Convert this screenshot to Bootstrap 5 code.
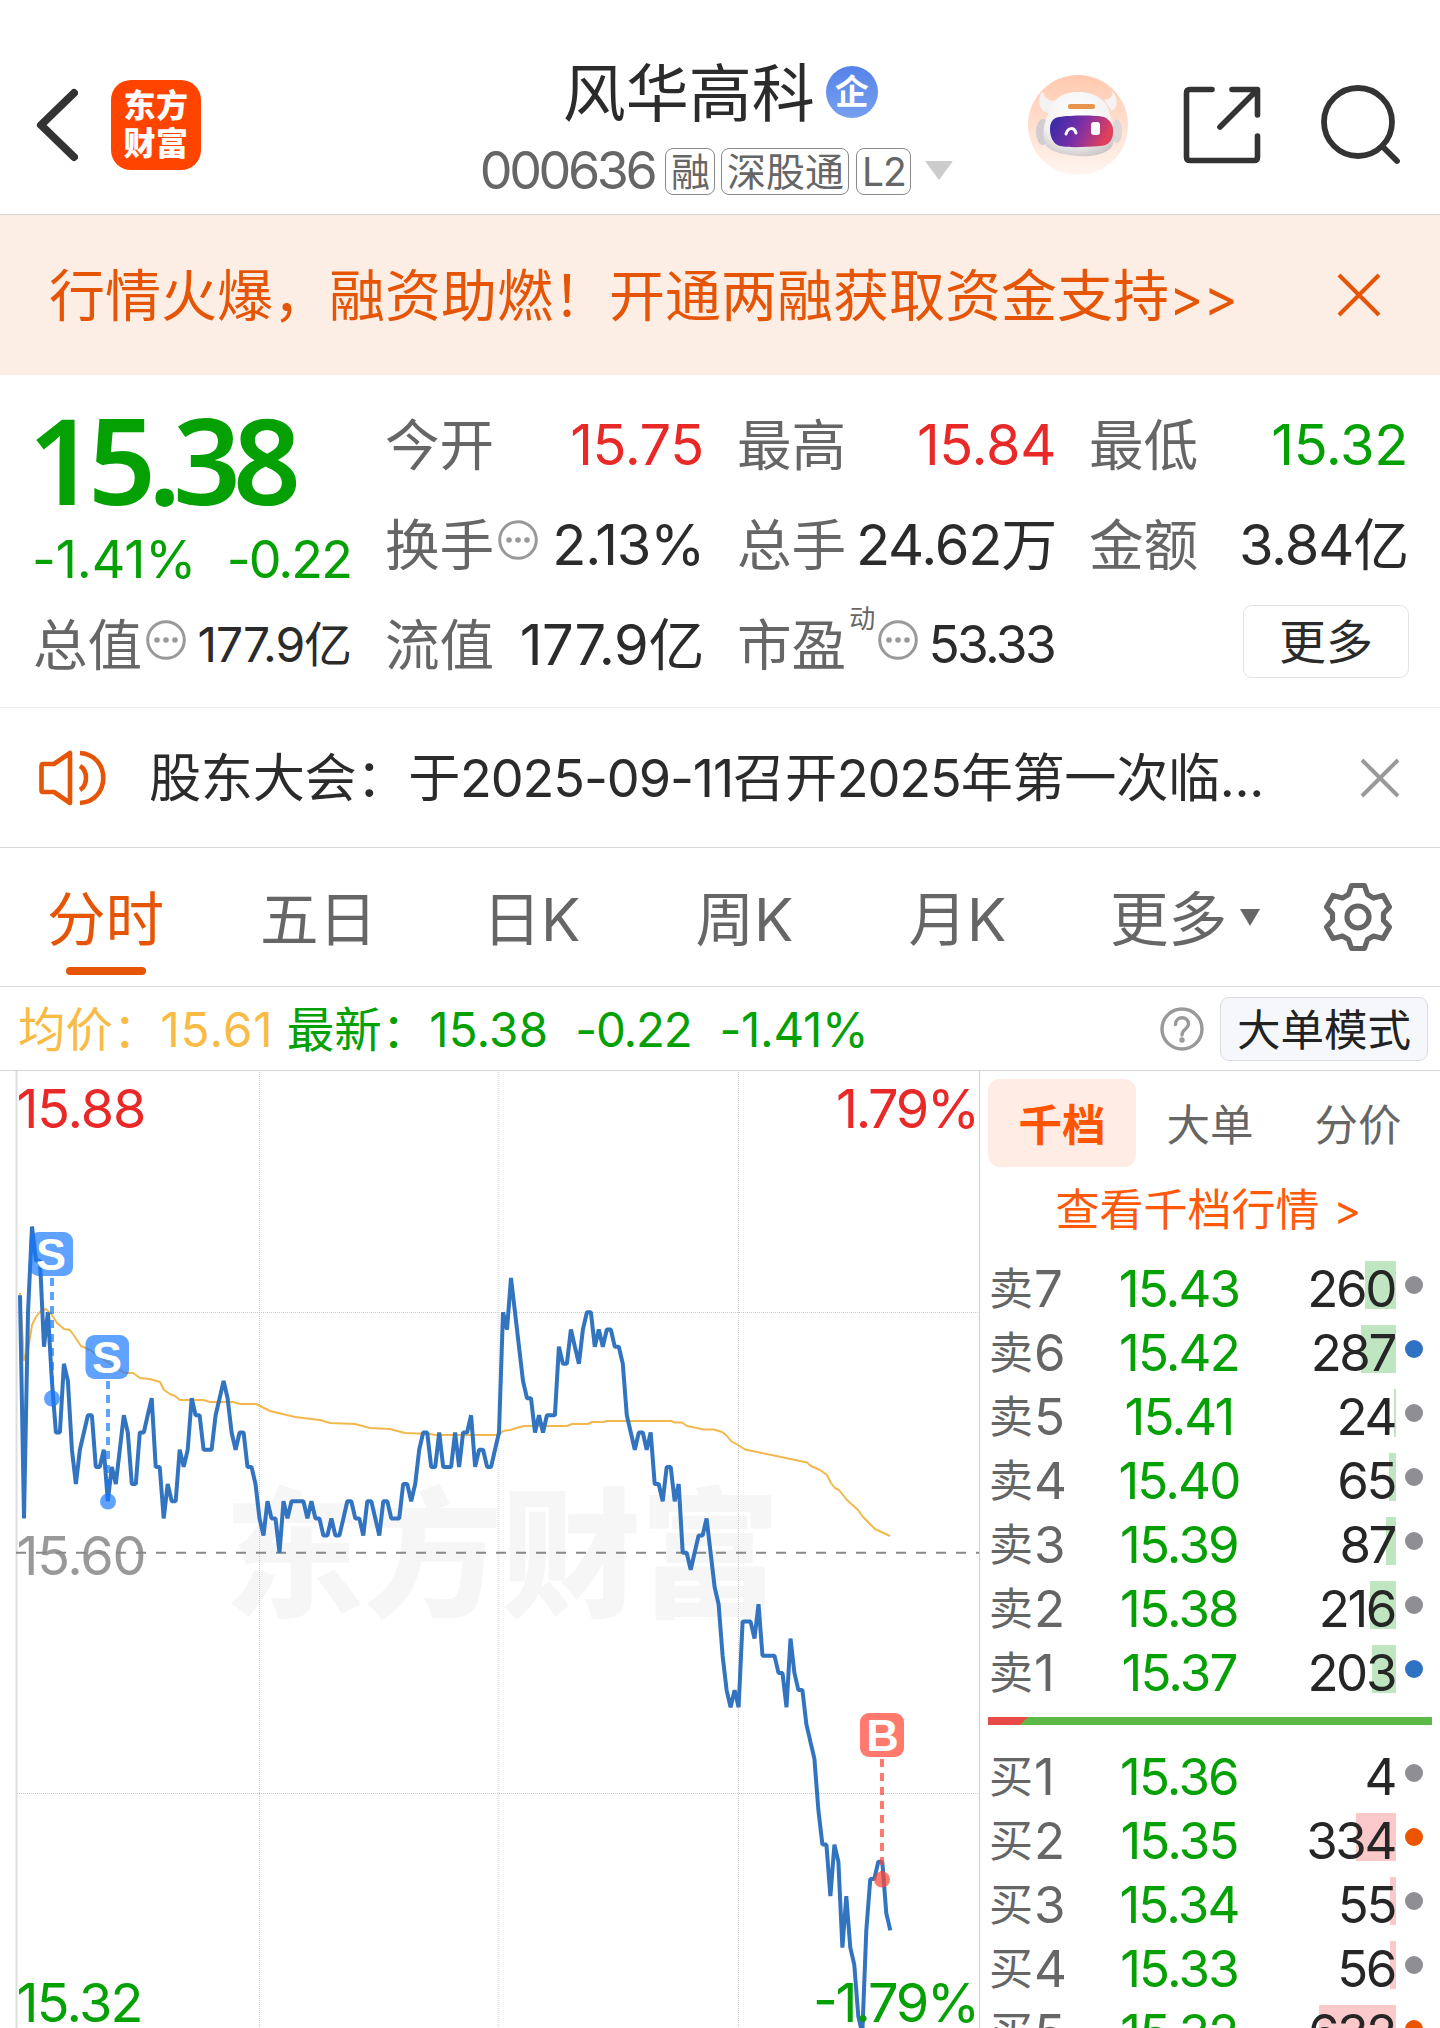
<!DOCTYPE html>
<html lang="zh-CN">
<head>
<meta charset="utf-8">
<meta name="viewport" content="width=device-width, initial-scale=1">
<title>风华高科 000636</title>
<link href="https://cdn.jsdelivr.net/npm/bootstrap@5.3.0/dist/css/bootstrap.min.css" rel="stylesheet">
<style>
  :root { --up:#e92828; --down:#04a004; --brand:#e65405; --ink:#2b2b2b; --dim:#666; --rule:#d6d6d6; }
  body { width:1440px; height:2028px; overflow:hidden; background:#fff; color:var(--ink);
         font-family:Inter,"Noto Sans CJK SC",sans-serif; line-height:1; white-space:nowrap; }
  svg { display:block; flex:none; }
  .up { color:var(--up); } .down { color:var(--down); } .dim { color:var(--dim); } .brand { color:var(--brand); }

  .topbar { height:215px; border-bottom:1px solid var(--rule); padding:48px 39px 0 36px; }
  .app-logo { width:90px; height:90px; border-radius:20px; background:#ff4400; color:#fff;
              font-size:32px; font-weight:900; line-height:38px; letter-spacing:.5px; margin-left:33px; }
  .stock-name { font-size:63px; height:88px; }
  .stock-name .nm-text { padding-top:3px; }
  .qi { width:52px; height:52px; border-radius:50%; background:linear-gradient(#5583e8,#78a0f0); color:#fff; font-size:34px; font-weight:700; margin-left:11px; }
  .code { font-size:52px; letter-spacing:-3.4px; color:var(--dim); margin-right:11px; }
  .chip { height:47px; border:1.5px solid #8a8a8a; border-radius:8px; font-size:39px; color:var(--dim); padding:0 4.5px; }

  .promo { height:160px; background:#fceee5; color:var(--brand); font-size:56px; padding:2px 59px 0 49px; }
  .promo .arrows { font-size:52px; }

  .quote { height:333px; padding:20px 34px 0 35px; grid-template-columns:repeat(4,1fr); grid-template-rows:repeat(3,100px);
           column-gap:37px; border-bottom:1px solid #ececec; font-size:54.6px; }
  .quote .lbl { color:var(--dim); margin-left:-2px; }
  .quote .lead-price { grid-row:span 2; padding-top:5px; }
  .big-price { font-family:"Noto Sans",sans-serif; font-size:119px; font-weight:600; letter-spacing:-8px; height:118px; margin-left:-7px; }
  .chg { font-size:52px; height:77px; padding-top:7px; letter-spacing:-1.9px; margin:0 -1px 0 -3px; }
  .val { font-size:56px; letter-spacing:-1.2px; margin-right:-2px; }
  .val.up, .val.down { letter-spacing:-.4px; }
  .val-s { font-size:48px; letter-spacing:-1.1px; margin-right:-1px; }
  .val-m { font-size:51.5px; letter-spacing:-2.7px; }
  .dyn { font-size:26px; margin:-52px 3px 0 3px; }
  .more-btn { width:166px; height:73px; border:1.5px solid #e3e3e3; border-radius:9px; font-size:47px; background:#fff; color:var(--ink); margin:-7px -3px 0 0; }

  .notice { height:140px; border-bottom:1px solid var(--rule); padding:0 40px 0 38px; font-size:52.2px; }
  .notice .txt { margin-left:41px; padding-top:1px; letter-spacing:-.35px; }
  .notice .n { letter-spacing:-1.1px; }

  .periods { height:139px; border-bottom:1px solid var(--rule); font-size:58.6px; color:var(--dim); padding-right:47px; }
  .periods > span { width:213px; padding:6px 2px 0 0; }
  .periods > span:nth-child(6) { width:240px; padding-right:0; }
  .periods .active { color:var(--brand); position:relative; }
  .periods .active::after { content:""; position:absolute; left:66px; bottom:-26px; width:80px; height:8px; border-radius:4px; background:var(--brand); }
  .summary { height:84px; border-bottom:1px solid var(--rule); font-size:47.5px; padding:0 12px 0 18px; }
  .summary > span { padding-top:2px; }
  .mode-btn { width:208px; height:64px; border:1.5px solid #dcdde0; border-radius:9px; background:#f6f7fa; font-size:43.5px; color:#222; padding:4px 0 0; }

  .book { width:461px; border-left:1px solid #cfcfcf; padding:8px 8px 0 8px; }
  .seg { height:88px; font-size:43.5px; color:var(--dim); }
  .seg > div { width:148px; border-radius:12px; padding-top:6px; }
  .seg .on { background:#ffece4; color:#ff5500; font-weight:700; }
  .deep { height:84px; font-size:44px; color:#ff5a0a; padding:2px 3px 0 0; }
  .lvl { height:64px; font-size:51px; padding:0 9px 0 1px; }
  .lvl .nm, .lvl .px, .lvl .qt span { padding-top:6px; }
  .lvl .nm { width:90px; }
  .lvl .nm b { font-size:44px; font-weight:400; margin-right:1px; vertical-align:2px; }
  .lvl .px { width:200px; letter-spacing:-1.8px; }
  .lvl .qt { width:117px; height:48px; letter-spacing:-2.4px; padding-right:1px; color:#262626; }
  .lvl .qt span { position:relative; }
  .lvl .qt i { position:absolute; right:0; top:0; height:48px; }
  .lvl .dot { width:18px; height:18px; border-radius:50%; }
</style>
</head>
<body>

<header class="topbar d-flex">
  <div class="d-flex align-items-center" style="height:154px">
    <svg width="42" height="74" viewBox="0 0 42 74" fill="none" stroke="#333" stroke-width="8" stroke-linecap="round" stroke-linejoin="round"><path d="M38 5 5 37 38 69"/></svg>
    <div class="app-logo d-flex flex-column align-items-center justify-content-center"><span>东方</span><span>财富</span></div>
  </div>
  <div class="d-flex flex-column ms-auto me-auto" style="padding-left:205px">
    <div class="stock-name d-flex align-items-center" style="padding-left:83px"><span class="nm-text">风华高科</span><span class="qi d-flex align-items-center justify-content-center">企</span></div>
    <div class="d-flex align-items-center" style="height:70px">
      <span class="code">000636</span>
      <span class="chip d-flex align-items-center">融</span>
      <span class="chip d-flex align-items-center" style="margin-left:6px">深股通</span>
      <span class="chip d-flex align-items-center" style="margin-left:7px;letter-spacing:-1px">L2</span>
      <svg width="30" height="20" viewBox="0 0 30 20" style="margin-left:13px"><path d="M1 0H29L15 19Z" fill="#ccc"/></svg>
    </div>
  </div>
  <div class="d-flex align-items-center" style="height:154px">
    <svg width="100" height="100" viewBox="0 0 100 100">
      <defs>
        <linearGradient id="halo" x1="0" y1="0" x2="0" y2="1"><stop offset="0" stop-color="#ffc9ae"/><stop offset="1" stop-color="#fff5f0"/></linearGradient>
        <linearGradient id="visor" x1="0" y1="0" x2="1" y2=".25"><stop offset="0" stop-color="#2d2ba8"/><stop offset=".55" stop-color="#7e2fa6"/><stop offset="1" stop-color="#e0405c"/></linearGradient>
        <radialGradient id="shell" cx=".45" cy=".3" r=".75"><stop offset="0" stop-color="#fff"/><stop offset=".65" stop-color="#f3f1f2"/><stop offset="1" stop-color="#cbc6c8"/></radialGradient>
      </defs>
      <circle cx="50" cy="50" r="50" fill="url(#halo)"/>
      <ellipse cx="15" cy="57" rx="7" ry="13" fill="#d2cdd0"/><ellipse cx="89" cy="56" rx="5" ry="12" fill="#ddd6d8"/>
      <path d="M13 18C9 27 12 37 20 38L28 26C20 26 17 23 15 17ZM83 15C86 20 84 24 76 25L84 36C91 31 90 21 83 15Z" fill="#f5f2f3"/>
      <path d="M50 17C67 17 80 25 82 40 88 52 88 66 83 73 76 80 62 82 50 81 36 80 24 77 18 71 14 61 15 49 20 40 22 25 34 17 50 17Z" fill="url(#shell)"/>
      <rect x="40" y="29" width="27" height="5" rx="2" fill="#e8944d"/>
      <path d="M31 42C43 40 68 40 76 42 83 45 86 52 85 59 84 67 79 71 72 71 57 72 43 73 32 71 25 69 22 62 22 54 22 47 25 43 31 42Z" fill="url(#visor)"/>
      <path d="M38 59C40 52 46 52 48 58" fill="none" stroke="#fff" stroke-width="3" stroke-linecap="round"/>
      <rect x="63" y="47" width="9" height="13" rx="3" fill="#fff"/>
    </svg>
    <svg width="78" height="78" viewBox="0 0 78 78" fill="none" stroke="#333" stroke-width="5.6" stroke-linecap="round" stroke-linejoin="round" style="margin-left:55px"><path d="M29 3.500H7Q3.500 3.500 3.500 7V71Q3.500 74.500 7 74.500H71Q74.500 74.500 74.500 71V50M49 3.500H74.500V29M73.500 4.500 37 41"/></svg>
    <svg width="80" height="80" viewBox="0 0 80 80" fill="none" stroke="#333" stroke-width="5.8" stroke-linecap="round" style="margin-left:60px"><circle cx="37" cy="37" r="34"/><path d="M62 62 76 76"/></svg>
  </div>
</header>

<section class="promo d-flex align-items-center justify-content-between">
  <div>行情火爆，融资助燃！开通两融获取资金支持<span class="arrows">&gt;&gt;</span></div>
  <svg width="44" height="44" viewBox="0 0 44 44" stroke="#e65405" stroke-width="4" style="margin-top:-3px"><path d="M2 2 42 42M42 2 2 42"/></svg>
</section>

<section class="quote d-grid">
  <div class="lead-price d-flex flex-column">
    <div class="big-price down d-flex align-items-center">15.38</div>
    <div class="chg down d-flex align-items-center justify-content-between"><span style="letter-spacing:-.1px">-1.41%</span><span>-0.22</span></div>
  </div>
  <div class="d-flex align-items-center justify-content-between"><span class="lbl">今开</span><span class="val up">15.75</span></div>
  <div class="d-flex align-items-center justify-content-between"><span class="lbl">最高</span><span class="val up">15.84</span></div>
  <div class="d-flex align-items-center justify-content-between"><span class="lbl">最低</span><span class="val down">15.32</span></div>

  <div class="d-flex align-items-center"><span class="lbl">换手</span><svg class="ms-1" width="40" height="40" style="margin-bottom:11px"><use href="#dots"/></svg><span class="val ms-auto">2.13%</span></div>
  <div class="d-flex align-items-center justify-content-between"><span class="lbl">总手</span><span class="val">24.62万</span></div>
  <div class="d-flex align-items-center justify-content-between"><span class="lbl">金额</span><span class="val">3.84亿</span></div>

  <div class="d-flex align-items-center"><span class="lbl">总值</span><svg class="ms-1" width="40" height="40" style="margin-bottom:11px"><use href="#dots"/></svg><span class="val-s ms-auto">177.9亿</span></div>
  <div class="d-flex align-items-center justify-content-between"><span class="lbl">流值</span><span class="val" style="letter-spacing:-.4px">177.9亿</span></div>
  <div class="d-flex align-items-center"><span class="lbl">市盈</span><span class="dyn dim">动</span><svg width="40" height="40" style="margin-bottom:11px"><use href="#dots"/></svg><span class="val-m ms-auto">53.33</span></div>
  <div class="d-flex align-items-center justify-content-end"><button class="more-btn p-0">更多</button></div>
</section>
<svg width="0" height="0" class="position-absolute"><symbol id="dots" viewBox="0 0 40 40"><circle cx="20" cy="20" r="18.3" fill="none" stroke="#999" stroke-width="3"/><g fill="#999"><circle cx="11" cy="20" r="2.8"/><circle cx="20" cy="20" r="2.8"/><circle cx="29" cy="20" r="2.8"/></g></symbol></svg>

<section class="notice d-flex align-items-center">
  <svg width="70" height="58" viewBox="0 0 70 58" fill="none" stroke="#e65405" stroke-width="4.6" stroke-linejoin="round"><path d="M5 15H16L32 4V54L16 43H5Q3.500 43 3.500 41V17Q3.500 15 5 15Z"/><path d="M42 17C50 22 50 36 42 41M42 4C73 6 73 52 42 54"/></svg>
  <div class="txt">股东大会：于<span class="n">2025-09-11</span>召开<span class="n">2025</span>年第一次临...</div>
  <svg class="ms-auto" width="40" height="40" viewBox="0 0 40 40" stroke="#999" stroke-width="4"><path d="M2 2 38 38M38 2 2 38"/></svg>
</section>

<nav class="periods d-flex align-items-center text-center">
  <span class="active">分时</span><span>五日</span><span>日K</span><span>周K</span><span>月K</span>
  <span class="d-flex align-items-center justify-content-center">更多<svg width="20" height="17" viewBox="0 0 20 17" style="margin:-5px 0 0 13px"><path d="M0 0H20L10 17Z" fill="#666"/></svg></span>
  <svg class="ms-auto" width="70" height="70" viewBox="0 0 70 70" fill="none" stroke="#666" stroke-width="5.200" stroke-linejoin="round"><path d="M28.500 3.500H41.500L44.500 12.500 50.500 16 60 13.500 66.500 25 60.500 31.500V38.500L66.500 45 60 56.500 50.500 54 44.500 57.500 41.500 66.500H28.500L25.500 57.500 19.500 54 10 56.500 3.500 45 9.500 38.500V31.500L3.500 25 10 13.500 19.500 16 25.500 12.500Z"/><circle cx="35" cy="35" r="11"/></svg>
</nav>

<section class="summary d-flex align-items-center">
  <span style="color:#f8bb45">均价：<span style="letter-spacing:1px">15.61</span></span>
  <span class="down" style="margin-left:13px">最新：<span style="letter-spacing:.2px">15.38</span></span>
  <span class="down" style="margin-left:27px;letter-spacing:-1.2px">-0.22</span>
  <span class="down" style="margin-left:28px;letter-spacing:-.3px">-1.41%</span>
  <svg class="ms-auto" width="44" height="44" viewBox="0 0 44 44" fill="none" stroke="#999" stroke-width="3.400"><circle cx="22" cy="22" r="20"/><path d="M15.500 17.500C15.500 8.500 28.500 8.500 28.500 17 28.500 22 22 22 22 28" stroke-linecap="round"/><circle cx="22" cy="33" r="1" fill="#999"/></svg>
  <button class="mode-btn" style="margin-left:16px">大单模式</button>
</section>

<main class="d-flex" style="height:957px">
  <svg id="chart" width="979" height="957" viewBox="0 1071 979 957">
    <text x="224" y="1606" font-size="140" font-weight="900" textLength="556" fill="#f6f6f6">东方财富</text>
    <path d="M16.500 1071V2028" stroke="#dedede" stroke-width="2"/>
    <g stroke="#c9c9c9" stroke-width="1" stroke-dasharray="1 1"><path d="M259.500 1072V2028M738.500 1072V2028M17 1312.500H979M17 1793.500H979"/><path d="M498.500 1072V2028" stroke-width="2" stroke="#e4e4e4"/></g>
    <g font-size="54">
      <text x="16.500" y="1128" fill="#e92828" textLength="130">15.88</text>
      <text x="836" y="1128" fill="#e92828" textLength="144">1.79%</text>
      <text x="16.500" y="1575" fill="#999" textLength="130">15.60</text>
    </g>
    <path d="M16 1552.700H979" stroke="#888" stroke-width="2" stroke-dasharray="10 10"/>
    <path fill="none" stroke="#f2b84e" stroke-width="2" stroke-linejoin="round" d="M20 1293 24 1360 28 1350 32 1325 36 1317 40 1312 46 1309 52 1315 57 1323 64 1329 70 1330 75 1337 81 1346 90 1350 100 1357 115 1367 125 1373 133 1373 140 1378 150 1379 160 1382 164 1390 170 1394 175 1396 180 1400H203L210 1402H233L240 1404H256L270 1411 295 1417 320 1420 330 1423 355 1424 370 1428 390 1429 405 1433 430 1434 436 1435H499L503 1431 510 1430 520 1427 524 1426H567L572 1424H588L592 1422H603L607 1421H671L675 1422.500H682L687 1426 704 1429.500H714L722 1432 727 1436 731 1441 738 1445 745 1449.500 807 1462.500 811 1466 820 1470 827 1475 831 1483 835 1488 839 1490 847 1500 858 1510 863 1517 870 1524 875 1529 890 1536"/>
    <polyline id="price" fill="none" stroke="#3274c0" stroke-width="4" stroke-linejoin="bevel"/>
    <g font-size="54" fill="#04a004">
      <text x="16.500" y="2022" textLength="127">15.32</text>
      <text x="813" y="2022" textLength="167">-1.79%</text>
    </g>
    <g fill="#1677ff" opacity=".68"><rect x="29.500" y="1232" width="43.500" height="44" rx="9"/><rect x="85.500" y="1335" width="43.500" height="44" rx="9"/><circle cx="52" cy="1398.500" r="8"/><circle cx="108" cy="1501.500" r="8"/><path d="M52 1278V1392M108 1381V1495" stroke="#1677ff" stroke-width="4" stroke-dasharray="8 6"/></g>
    <g fill="#ff4634" opacity=".72"><rect x="860" y="1713" width="44" height="44" rx="9"/><circle cx="882" cy="1879.500" r="8"/><path d="M882 1759V1873" stroke="#ff4634" stroke-width="4" stroke-dasharray="8 6"/></g>
    <g font-family="Liberation Sans" font-size="45" font-weight="700" fill="#fff" text-anchor="middle"><text x="51" y="1270">S</text><text x="107" y="1373">S</text><text x="882.500" y="1751">B</text></g>
  </svg>

  <aside class="book flex-shrink-0">
    <div class="seg d-flex">
      <div class="on d-flex align-items-center justify-content-center">千档</div>
      <div class="d-flex align-items-center justify-content-center">大单</div>
      <div class="d-flex align-items-center justify-content-center">分价</div>
    </div>
    <div class="deep d-flex align-items-center justify-content-center">查看千档行情<span style="margin-left:14px;font-size:42px">&gt;</span></div>
    <div id="asks" style="margin-top:2px"></div>
    <svg width="444" height="8" viewBox="0 0 444 8" style="margin:16px 0"><path d="M0 0H444V8H0Z" fill="#5db946"/><path d="M0 0H40L32 8H0Z" fill="#e84a46"/></svg>
    <div id="bids"></div>
  </aside>
</main>

<script src="https://cdn.jsdelivr.net/npm/bootstrap@5.3.0/dist/js/bootstrap.bundle.min.js"></script>
<script>
  // Minute prices as ticks (0.01) above the previous close of 15.60
  const ticks = [15,2,14,19,17,17,12,14,10,7,7,11,10,6,4,6,7,8,8,5,5,6,3,5,4,6,8,7,4,4,7,7,8,9,5,5,2,4,3,3,6,5,6,9,8,8,6,6,6,8,9,10,9,7,6,7,7,5,5,4,2,1,3,2,2,0,3,2,3,3,3,3,2,3,2,2,1,1,2,1,1,2,3,3,2,2,1,3,3,2,1,3,3,2,2,2,4,4,3,4,6,7,7,5,5,7,5,5,5,7,5,7,7,8,5,6,6,5,5,6,7,
    14,13,16,14,12,10,9,9,7,8,7,8,8,8,12,11,11,13,12,11,13,14,14,12,13,12,13,13,12,12,11,8,7,6,7,7,6,7,4,4,3,5,5,3,4,0,0,-1,0,1,1,2,0,-2,-3,-6,-8,-9,-8,-9,-4,-4,-4,-5,-3,-6,-6,-6,-6,-7,-7,-9,-5,-7,-8,-8,-10,-11,-12,-15,-17,-17,-20,-17,-18,-23,-20,-23,-24,-27,-28,-22,-19,-19,-18,-18,-21,-22];
  document.getElementById('price').setAttribute('points',
    ticks.map((t, i) => (20 + i * 3.992).toFixed(1) + ',' + (1552.7 - t * 17.17).toFixed(1)).join(' '));

  const grey = '#8e8e93', blue = '#2f72c3', orange = '#eb5500';
  const asks = [['7','15.43',260,31,grey],['6','15.42',287,35,blue],['5','15.41',24,2,grey],['4','15.40',65,7,grey],['3','15.39',87,10,grey],['2','15.38',216,26,grey],['1','15.37',203,24,blue]];
  const bids = [['1','15.36',4,0,grey],['2','15.35',334,40,orange],['3','15.34',55,6,grey],['4','15.33',56,6,grey],['5','15.32',632,77,orange]];
  const row = (side, tint) => ([n, p, q, w, c]) => `<div class="lvl d-flex align-items-center">
    <span class="nm dim"><b>${side}</b>${n}</span><span class="px down text-center">${p}</span>
    <span class="qt position-relative d-flex align-items-center justify-content-end"><i style="width:${w}px;background:${tint}"></i><span>${q}</span></span>
    <span class="dot ms-auto" style="background:${c}"></span></div>`;
  document.getElementById('asks').innerHTML = asks.map(row('卖', '#bfe6c1')).join('');
  document.getElementById('bids').innerHTML = bids.map(row('买', '#fbc9c9')).join('');
</script>
</body>
</html>
